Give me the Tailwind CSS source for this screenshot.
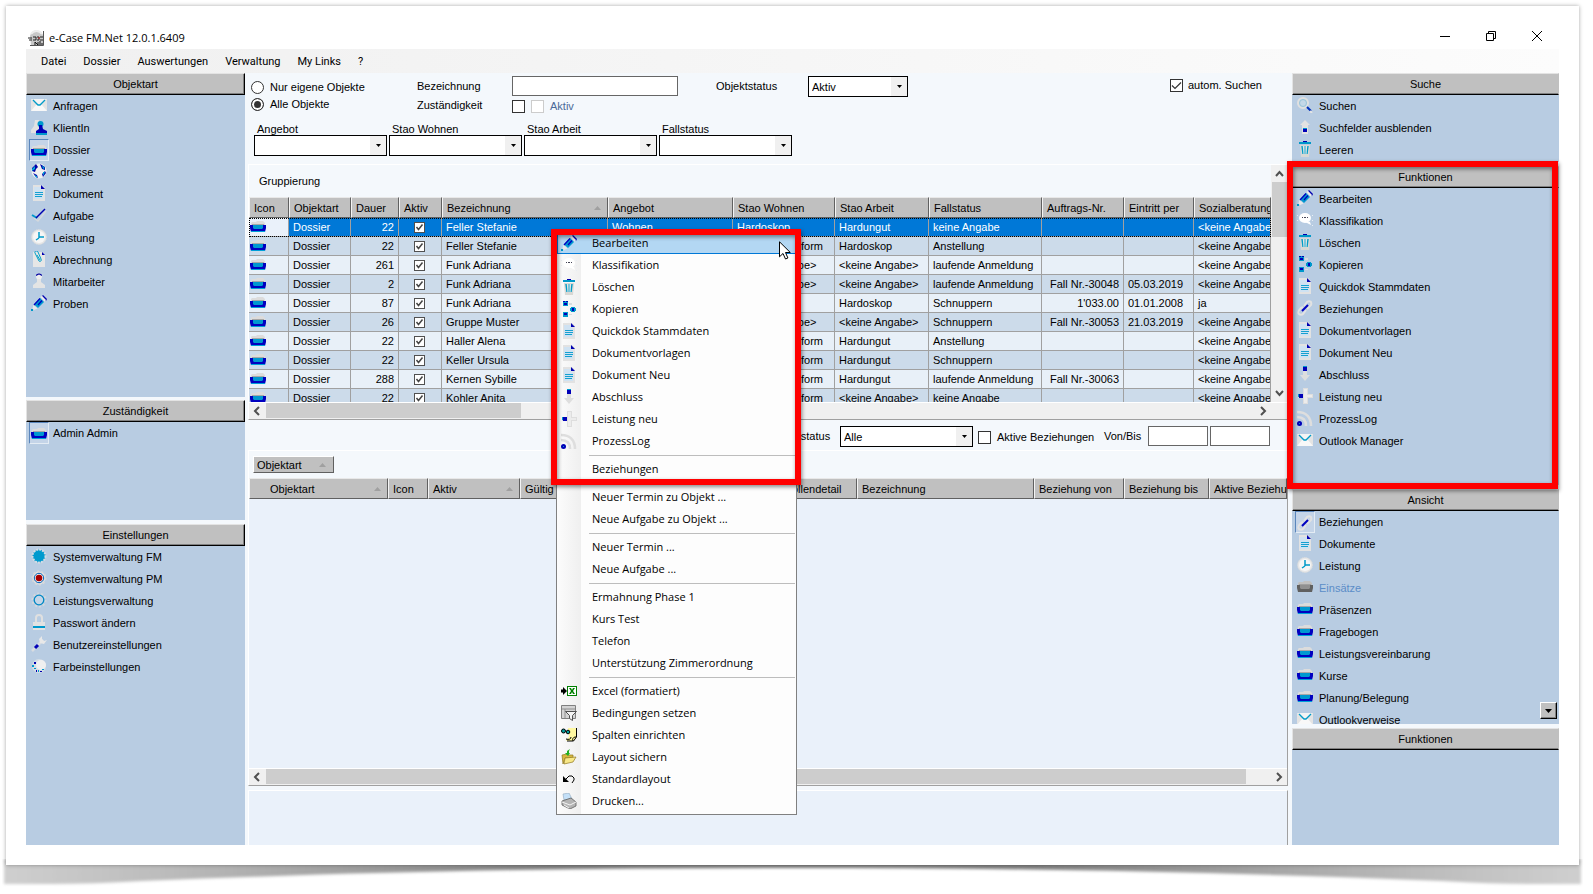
<!DOCTYPE html>
<html lang="de">
	<head>
		<meta charset="UTF-8" />
		<meta name="viewport" content="width=device-width, initial-scale=1.0" />
		<title>e-Case FM.Net 12.0.1.6409</title>
		<script src="https://cdn.jsdelivr.net/npm/@tailwindcss/browser@4"></script>
	</head>
	<body class="bg-white text-black h-screen overflow-hidden pl-[6px] pt-[6px] pr-[14px] pb-[29px] font-['Liberation_Sans',Arial,sans-serif] text-[11px] leading-4">
		<!-- icon sprite -->
		<svg class="hidden">
			<symbol id="i-mail" viewBox="0 0 16 16"><path d="M0 2h16v12H0z" fill="#e4e4e4"/><path d="M0 14l5-6h6l5 6z" fill="#f8f8f8"/><path d="M1 2h14L8 8z" fill="#f4f4f4"/><path d="M2 3l5 5h2l5-5" fill="none" stroke="#009bc8" stroke-width="1.300"/></symbol>
			<symbol id="i-client" viewBox="0 0 16 16"><path d="M4 1h4v4l3 5v4H0v-3l3-4z" fill="#e2e2e2"/><circle cx="9.500" cy="5" r="3" fill="#0098cc"/><path d="M8 6h3l1 4 4 2v3H5v-3l3-2z" fill="#0000b8"/><path d="M5 14h11v2H5z" fill="#0098cc"/></symbol>
			<symbol id="i-dossier" viewBox="0 0 16 16"><path d="M2 3h4l1-1h6l2 2v3H1V4z" fill="#dcdcdc"/><path d="M2 5h12v1H2z" fill="#a8a8a8"/><path d="M0 6h16v3l-1 4H1L0 9z" fill="#0000c0"/><path d="M3 6h10v3l-1 1H4L3 9z" fill="#0098d0"/><path d="M1 12h14v1H1z" fill="#00a0d8"/></symbol>
			<symbol id="i-dossier-off" viewBox="0 0 16 16"><path d="M2 3h4l1-1h6l2 2v3H1V4z" fill="#c0c0c0"/><path d="M2 5h12v1H2z" fill="#a0a0a0"/><path d="M0 6h16v3l-1 4H1L0 9z" fill="#606060"/><path d="M3 6h10v3l-1 1H4L3 9z" fill="#909090"/></symbol>
			<symbol id="i-globe" viewBox="0 0 16 16"><circle cx="8" cy="8" r="7.500" fill="#f0f0f0"/><path d="M5 1L1 5v3l3 1 1-3 2-2zM9 1l5 3v3l-3-1zM14 8l1 2-3 4-1-3zM2 10l3 4 2 1-1-3z" fill="#0000a8"/><path d="M4 3L1 6v2l3-2zM11 2l3 3-2 1zM12 9h2l-2 4zM3 12l3 3v-2z" fill="#00a8d8"/></symbol>
			<symbol id="i-doc" viewBox="0 0 16 16"><path d="M2 0h9l3 3v13H2z" fill="#e2e2e2"/><path d="M3 2h7v3h2v9H3z" fill="#cfe2f2"/><path d="M10 0l4 4h-4z" fill="#0000b0"/><path d="M4 7.500h8M4 9.500h8M4 11.500h7" stroke="#0098cc" stroke-width=".9"/></symbol>
			<symbol id="i-check" viewBox="0 0 16 16"><path d="M3 11l4 3 8-10" fill="none" stroke="#d4d8dc" stroke-width="1.500"/><path d="M1 8l5 3" stroke="#0098cc" stroke-width="2"/><path d="M5 11L14 2" stroke="#0000b0" stroke-width="1.400"/></symbol>
			<symbol id="i-clock" viewBox="0 0 16 16"><circle cx="8" cy="8" r="7.500" fill="#e6e6e6" stroke="#dcdcdc" stroke-dasharray="1 1"/><circle cx="8" cy="8" r="6" fill="#f6f6f6"/><path d="M8 3v6M8 8h5M8 9l-3 2" fill="none" stroke="#009ac8" stroke-width="1.500"/></symbol>
			<symbol id="i-clip" viewBox="0 0 16 16"><path d="M2 1h9l3 3v12H2z" fill="#e6e6e6"/><path d="M11 1l3 3h-3z" fill="#0000b0"/><path d="M6 4l3 5M4 2l4 8c1 1 3 0 2-2L7 1C6-1 3 0 4 2" fill="none" stroke="#00a0c8"/></symbol>
			<symbol id="i-staff" viewBox="0 0 16 16"><circle cx="8" cy="3.500" r="3" fill="#eee"/><path d="M5 2c1-2 5-2 6 0v1L8 1.500 5 3z" fill="#0000a0"/><path d="M6 6h4v3l4 3v3H2v-3l4-3z" fill="#e4e4e4"/></symbol>
			<symbol id="i-pencil" viewBox="0 0 16 16"><path d="M11 1l1-1 4 4-1 2z" fill="#0000b0"/><path d="M9.500 2L11 1l4 4-1.500 1.500z" fill="#eee"/><path d="M9 3l4 4-6 6-4-3.500z" fill="#0098d0"/><path d="M9 3.500L3 10M7 10l4-4.500" stroke="#0000c0" stroke-width="1.300"/><path d="M2.500 10l4 3.500L3 15l-1.500-1.500z" fill="#e8e8e8"/><path d="M0 14h2v2H0z" fill="#0098c8"/></symbol>
			<symbol id="i-gearblue" viewBox="0 0 16 16"><circle cx="8" cy="8" r="6.500" fill="#009ace" stroke="#d4dce4" stroke-width="2" stroke-dasharray="2 1"/></symbol>
			<symbol id="i-gearred" viewBox="0 0 16 16"><circle cx="8" cy="8" r="6.500" fill="#e4e4e4" stroke="#d8d8d8" stroke-width="2" stroke-dasharray="2 2"/><circle cx="8" cy="8" r="4.700" fill="#f0f0f0" stroke="#0060b8"/><circle cx="8" cy="8" r="3.300" fill="#a80000"/></symbol>
			<symbol id="i-gear" viewBox="0 0 16 16"><circle cx="8" cy="8" r="6.500" fill="none" stroke="#d4d8dc" stroke-width="2" stroke-dasharray="2 2"/><circle cx="8" cy="8" r="4.800" fill="#c4d6e8" stroke="#0088c4" stroke-width="1.300"/></symbol>
			<symbol id="i-lock" viewBox="0 0 16 16"><path d="M5 8V4c0-4 6-4 6 0v4" fill="none" stroke="#e0e0e0" stroke-width="2"/><path d="M2 8h12v8H2z" fill="#e2e2e2"/><path d="M2 12h12v2H2z" fill="#0098cc"/></symbol>
			<symbol id="i-wrench" viewBox="0 0 16 16"><path d="M1 15L12 4" stroke="#d8dce0" stroke-width="2.500"/><path d="M8 3l3-3v3l2 2 3-1-3 4-4-1z" fill="#e8e8e8"/><path d="M4 12l3-3" stroke="#0000b8" stroke-width="3"/></symbol>
			<symbol id="i-palette" viewBox="0 0 16 16"><circle cx="8" cy="8" r="7" fill="#d4dde6"/><circle cx="10" cy="7" r="5" fill="#f0f0f0"/><path d="M3 4h2v2H3zM5 12h1v2H5zM9 13h2v1H9z" fill="#0000b0"/><path d="M1 7h2v2H1zM3 10h2v1H3zM7 12h1v2H7zM11 11h2v1h-2z" fill="#0098cc"/></symbol>
			<symbol id="i-search" viewBox="0 0 16 16"><circle cx="6" cy="6" r="5" fill="#c4d8e8" stroke="#e0e0e0" stroke-width="2"/><circle cx="6" cy="6" r="3.500" fill="none" stroke="#98c4d8"/><path d="M10 10l4 4" stroke="#0030b8" stroke-width="2"/><path d="M13 14l2 2" stroke="#e4e4e4" stroke-width="2"/></symbol>
			<symbol id="i-up" viewBox="0 0 16 16"><path d="M8 1l5 5h-2v9H5V6H3z" fill="#e2e2e2"/><path d="M6 10h4v3H6z" fill="#0000b8"/><path d="M6 9h4v1H6z" fill="#0098cc"/></symbol>
			<symbol id="i-trash" viewBox="0 0 16 16"><path d="M3 4h10l-1 12H4z" fill="#d8d8d4"/><path d="M2 1h12v2H2z" fill="#0098c8"/><path d="M6 0h4v1H6z" fill="#0000b0"/><path d="M5 5l1 8M8 5v8M11 5l-1 8" stroke="#009cc8" stroke-width="1.400"/><path d="M7 5v8M9 5v8" stroke="#fff" stroke-width=".6"/></symbol>
			<symbol id="i-bubble" viewBox="0 0 16 16"><ellipse cx="8" cy="6" rx="6" ry="5" fill="#fff"/><path d="M8 10h5l1 3z" fill="#fff"/><path d="M5 5h1v1H5zM7 5h2v1H7zM10 5h1v1h-1z" fill="#445"/><path d="M0 3h1v1H0zM0 8h1v1H0zM15 3h1v1h-1zM15 8h1v1h-1zM15 13h1v1h-1z" fill="#e8eef4"/></symbol>
			<symbol id="i-copy" viewBox="0 0 16 16"><path d="M8 2h3v2H8zM8 13h3v1H8z" fill="#d8dce0"/><path d="M2 0h5v5H2zM2 11h5v5H2zM10 6h4v1h1v3h-1v1h-4v-1H9V7h1z" fill="#0098cc"/><path d="M2 0h2v1H2zM5 0h2v1H5zM3 2h3v2H3zM3 12h3v2H3zM11 7h2v3h-2z" fill="#0000b8"/></symbol>
			<symbol id="i-link" viewBox="0 0 16 16"><path d="M2 14c-2-2 0-4 2-6l2-1M9 10l-3 4c-1 1-3 1-4 0M7 6l3-4c3-2 5 0 4 3l-4 4" fill="none" stroke="#e2e2e2" stroke-width="2"/><path d="M5 11l6-6" stroke="#0000c0" stroke-width="2"/></symbol>
			<symbol id="i-down" viewBox="0 0 16 16"><path d="M6 1h4v8h3l-5 6-5-6h3z" fill="#dedede"/><path d="M6 1h4v4H6z" fill="#0000b8"/><path d="M6 0h4v1H6z" fill="#0098cc"/></symbol>
			<symbol id="i-plus" viewBox="0 0 16 16"><path d="M6 0h5v6h5v4h-5v6H6v-6H1V6h5z" fill="#dedede"/><path d="M7 1h3v14H7zM8 7h7v2H8z" fill="#ececec"/><path d="M2 6h4v4H2z" fill="#0000b8"/><path d="M1 6h1v3H1z" fill="#0098cc"/></symbol>
			<symbol id="i-rss" viewBox="0 0 16 16"><path d="M0 2c9 0 14 5 14 14M0 7c6 0 9 3 9 9" fill="none" stroke="#dedede" stroke-width="2.600"/><circle cx="2.500" cy="13.500" r="2.500" fill="#0000b8"/><path d="M2 13h1v1H2z" fill="#0098cc"/></symbol>
			<symbol id="i-excel" viewBox="0 0 16 16"><path d="M0 6.500h2V4l4 4-4 4V9.500H0z" fill="#000"/><path d="M6 3h10v10H6z" fill="#008000"/><path d="M7 4h8v8H7z" fill="#fff"/><path d="M8 5h2l1 2 1-2h2l-2 3 2 3h-2l-1-2-1 2H8l2-3z" fill="#008000"/></symbol>
			<symbol id="i-filter" viewBox="0 0 16 16"><path d="M.5.500h14v13H.5z" fill="#d4d4d4" stroke="#808080"/><path d="M1 4h13M4 4v9" stroke="#909090"/><path d="M4.500 6.500h11l-4 4v5l-3-2v-3z" fill="#f4f4f4" stroke="#505050"/></symbol>
			<symbol id="i-columns" viewBox="0 0 16 16"><path d="M7 1h8.500v9l-3 4H6l-1-1 3-3z" fill="#fff8a0"/><path d="M15.500 1v9l-3 4H6M5 12c3 1 5 0 5-2M12 14c-1-2 0-4 3-4" fill="none" stroke="#000"/><circle cx="2.500" cy="4" r="2" fill="#00a0a0" stroke="#000"/><circle cx="7" cy="5" r="1.800" fill="#00a0a0" stroke="#000"/></symbol>
			<symbol id="i-folder" viewBox="0 0 16 16"><path d="M1 6l5-1 1 1h5v3H4l-2 6z" fill="#d8b840" stroke="#907820" stroke-width=".7"/><path d="M4 9l11-1-3 5-9 2z" fill="#f8e888" stroke="#907820" stroke-width=".7"/><path d="M9 0L6 2v2H4l3 3 2-3H8V2z" fill="#20b020"/></symbol>
			<symbol id="i-undo" viewBox="0 0 16 16"><path d="M2 5v6h6z" fill="#000"/><path d="M5 8l3-3h3l2 2v2l-2 3" fill="none" stroke="#000"/></symbol>
			<symbol id="i-printer" viewBox="0 0 16 16"><path d="M3 7L2 1l6-1 3 6z" fill="#c4e0f8" stroke="#90a8c0" stroke-width=".6"/><path d="M1 8l9-3 5 4v4l-6 3-8-4z" fill="#b4b4b4" stroke="#606060" stroke-width=".8"/><path d="M1 9l8 3 6-3M3 12l5 3" fill="none" stroke="#f4f4f4"/></symbol>
		</svg>

		<div class="relative h-full">
			<!-- curled paper shadow -->
			<svg class="absolute -left-1 top-[calc(100%-6px)] h-8 w-[calc(100%+8px)]" viewBox="0 0 1581 32" preserveAspectRatio="none">
				<defs>
					<linearGradient id="curl"><stop offset="0" stop-color="#cfcfcf"/><stop offset=".1" stop-color="#bcbcbc"/><stop offset=".35" stop-color="#808080"/><stop offset=".65" stop-color="#808080"/><stop offset=".9" stop-color="#bcbcbc"/><stop offset="1" stop-color="#cfcfcf"/></linearGradient>
					<filter id="soft"><feGaussianBlur stdDeviation="1.500"/></filter>
				</defs>
				<path d="M2 0H1579V25H1530Q1490 25 1440 22C1200 12 1000 9 790 9S380 12 140 22Q90 25 50 25H2z" fill="url(#curl)" filter="url(#soft)"/>
			</svg>
			<div class="relative h-full bg-white shadow-[0_0_4px_rgba(0,0,0,0.35)] px-5 pt-[24px] pb-5 flex flex-col">
				<header class="h-[19px] shrink-0 flex items-start justify-between pl-[2px] pr-4">
					<div class="flex items-center gap-[5px] font-['Open_Sans','Noto_Sans',sans-serif]">
						<svg class="size-4" viewBox="0 0 16 16"><path d="M2 6c2-7 10-7 13-1v10H3z" fill="#c8c8c8"/><path d="M3 4c3-4 8-4 11 0" fill="none" stroke="#eee" stroke-width="2"/><path d="M15.500 1v14.500H2" fill="none" stroke="#555"/><path d="M0 8h4M1 10h3M5 7h3v3H5M9 7h2v3H9M12 7h3M12 10h3" stroke="#222" fill="none"/><path d="M7 15v-3l3 3v-3M11 12h2M11 14h4" stroke="#111" fill="none"/><path d="M10 8h2" stroke="#c02020"/></svg>
						<h1>e-Case FM.Net 12.0.1.6409</h1>
					</div>
					<div class="flex gap-[34px]">
						<button aria-label="Minimieren"><svg class="size-3" viewBox="0 0 12 12"><path d="M1 6.500h10" stroke="#000"/></svg></button>
						<button aria-label="Wiederherstellen"><svg class="size-3" viewBox="0 0 12 12"><path d="M1.500 3.500h7v7h-7zM3.500 3.500v-2h7v7h-2" fill="none" stroke="#000"/></svg></button>
						<button aria-label="Schliessen"><svg class="size-3" viewBox="0 0 12 12"><path d="M1 1l10 10M11 1L1 11" stroke="#000"/></svg></button>
					</div>
				</header>
				<nav class="h-6 shrink-0 flex items-center gap-[17px] pl-[15px] pt-px bg-linear-to-r from-[#f0f0f0] to-[#fcfcfc] font-[Roboto,sans-serif]">
					<a href="#">Datei</a><a href="#">Dossier</a><a href="#">Auswertungen</a><a href="#">Verwaltung</a><a href="#">My Links</a><a href="#">?</a>
				</nav>

				<div class="flex flex-1 min-h-0 bg-[#f4f8fc]">
					<!-- left -->
					<aside class="w-[219px] shrink-0 flex flex-col">
						<h2 class="h-[22px] shrink-0 text-center leading-5 bg-[#c0c0c0] border border-t-[#e3e3e3] border-l-[#e3e3e3] border-r-black border-b-black shadow-[inset_-1px_-1px_0_#808080]">Objektart</h2>
						<ul id="objektart" class="h-[302px] bg-[#b8cce2] pl-[3px]"></ul>
						<h2 class="mt-[3px] h-[22px] shrink-0 text-center leading-5 bg-[#c0c0c0] border border-t-[#e3e3e3] border-l-[#e3e3e3] border-r-black border-b-black shadow-[inset_-1px_-1px_0_#808080]">Zuständigkeit</h2>
						<ul id="zustaendigkeit" class="h-[98px] bg-[#b8cce2] pl-[3px]"></ul>
						<h2 class="mt-1 h-[22px] shrink-0 text-center leading-5 bg-[#c0c0c0] border border-t-[#e3e3e3] border-l-[#e3e3e3] border-r-black border-b-black shadow-[inset_-1px_-1px_0_#808080]">Einstellungen</h2>
						<ul id="einstellungen" class="flex-1 bg-[#b8cce2] pl-[3px]"></ul>
					</aside>

					<!-- center -->
					<main class="relative flex-1 min-w-0 ml-[3px] flex flex-col">
						<form class="h-[91px] shrink-0">
							<div class="flex items-start pl-[3px] pr-[26px] pt-[3px]">
								<div class="w-[166px] pt-[3px] flex flex-col gap-[1px]">
									<label class="flex items-center gap-[6px]"><input type="radio" name="scope" class="appearance-none size-[13px] rounded-full border border-[#333] bg-white checked:bg-[#333] checked:shadow-[inset_0_0_0_2px_white]" />Nur eigene Objekte</label>
									<label class="flex items-center gap-[6px]"><input type="radio" name="scope" checked class="appearance-none size-[13px] rounded-full border border-[#333] bg-white checked:bg-[#333] checked:shadow-[inset_0_0_0_2px_white]" />Alle Objekte</label>
								</div>
								<div class="w-[95px] pt-[2px] flex flex-col gap-[3px]">
									<label for="bez">Bezeichnung</label>
									<label for="zust">Zuständigkeit</label>
								</div>
								<div class="w-[166px]">
									<input id="bez" type="text" class="block w-full h-5 bg-white border border-[#666] px-1" />
									<div class="mt-[2px] flex items-center">
										<input id="zust" type="checkbox" class="appearance-none size-[13px] border border-[#333] bg-white mr-[6px]" />
										<label class="flex items-center gap-[6px] text-[#4a6a98]"><input type="checkbox" disabled class="appearance-none size-[13px] border border-[#ccc] bg-white" />Aktiv</label>
									</div>
								</div>
								<label for="ostatus" class="ml-[38px] w-[92px] pt-[2px]">Objektstatus</label>
								<div class="relative w-[100px]">
									<select id="ostatus" class="appearance-none w-full h-[21px] bg-white border border-black px-[3px]"><option>Aktiv</option></select>
									<span class="pointer-events-none absolute right-px inset-y-px w-4 bg-[#f0f0f0] grid place-items-center"><svg class="w-[5px] h-[3px]" viewBox="0 0 5 3"><path d="M0 0h5L2.500 3z"/></svg></span>
								</div>
								<label class="ml-auto mt-[1px] flex items-center gap-[5px]">
									<span class="relative size-[13px]"><input type="checkbox" checked class="block appearance-none size-[13px] border border-[#333] bg-white" /><svg class="pointer-events-none absolute inset-0" viewBox="0 0 13 13"><path d="M2 6.500l3 3 6-6" fill="none" stroke="#333" stroke-width="1.200"/></svg></span>
									autom. Suchen
								</label>
							</div>
							<div id="combos" class="flex gap-[2px] pl-[6px] pt-[7px]"></div>
						</form>

						<!-- upper grid -->
						<section class="h-[256px] shrink-0 flex flex-col border-t border-l border-white border-b border-b-[#a0a0a0]">
							<div class="flex flex-1 min-h-0">
								<div class="flex-1 min-w-0 overflow-hidden">
									<p class="h-8 leading-8 pl-[10px]">Gruppierung</p>
									<table class="w-full table-fixed border-separate border-spacing-0 whitespace-nowrap">
										<colgroup><col class="w-10"/><col class="w-[62px]"/><col class="w-[48px]"/><col class="w-[43px]"/><col class="w-[166px]"/><col class="w-[125px]"/><col class="w-[102px]"/><col class="w-[94px]"/><col class="w-[113px]"/><col class="w-[82px]"/><col class="w-[70px]"/><col/></colgroup>
										<thead id="head1"></thead>
										<tbody id="rows"></tbody>
									</table>
								</div>
								<div class="w-[17px] bg-[#f0f0f0] flex flex-col px-px">
									<svg class="w-full h-[17px] shrink-0" viewBox="0 0 15 17"><path d="M4 11l3.500-4 3.500 4" fill="none" stroke="#505050" stroke-width="2"/></svg>
									<div class="h-[55px] bg-[#cdcdcd]"></div>
									<svg class="mt-auto w-full h-[17px] shrink-0" viewBox="0 0 15 17"><path d="M4 6l3.500 4L11 6" fill="none" stroke="#505050" stroke-width="2"/></svg>
								</div>
							</div>
							<div class="h-[17px] shrink-0 bg-[#f0f0f0] border-t border-white flex pr-[17px]">
								<svg class="w-[17px] h-4" viewBox="0 0 17 16"><path d="M10 4L6 8l4 4" fill="none" stroke="#505050" stroke-width="2"/></svg>
								<div class="w-[255px] h-[15px] bg-[#cdcdcd]"></div>
								<svg class="ml-auto w-[17px] h-4" viewBox="0 0 17 16"><path d="M7 4l4 4-4 4" fill="none" stroke="#505050" stroke-width="2"/></svg>
							</div>
						</section>

						<form class="h-[30px] shrink-0 flex items-start justify-end pr-[18px] pt-[6px]">
							<label for="bstatus" class="pt-[2px] w-[71px]">Objektstatus</label>
							<div class="relative w-[133px]">
								<select id="bstatus" class="appearance-none w-full h-[21px] bg-white border border-black px-[3px]"><option>Alle</option></select>
								<span class="pointer-events-none absolute right-px inset-y-px w-4 bg-[#f0f0f0] grid place-items-center"><svg class="w-[5px] h-[3px]" viewBox="0 0 5 3"><path d="M0 0h5L2.500 3z"/></svg></span>
							</div>
							<label class="ml-[5px] pt-[3px] w-[126px] flex items-center gap-[6px]"><input type="checkbox" class="appearance-none size-[13px] border border-[#333] bg-white" />Aktive Beziehungen</label>
							<label for="von" class="pt-[2px] w-11">Von/Bis</label>
							<input id="von" type="text" class="w-[60px] h-5 bg-white border border-[#666]" />
							<input type="text" aria-label="Bis" class="ml-[2px] w-[60px] h-5 bg-white border border-[#666]" />
						</form>

						<!-- lower grid -->
						<section class="flex-1 min-h-0 flex flex-col border border-white border-r-[#a0a0a0] border-b-[#a0a0a0]">
							<div class="h-[27px] shrink-0 pl-1 pt-[5px]">
								<button class="w-[81px] h-[17px] flex items-center justify-between pl-[3px] pr-[7px] bg-[#c0c0c0] border border-white border-r-[#606060] border-b-[#606060]">Objektart <svg class="w-[7px] h-1" viewBox="0 0 7 4"><path d="M0 4h7L3.500 0z" fill="#a0a0a0"/></svg></button>
							</div>
							<div class="flex-1 min-h-0 overflow-hidden bg-[#eaf1fa]">
								<table class="w-full table-fixed border-separate border-spacing-0 whitespace-nowrap">
									<colgroup><col class="w-[139px]"/><col class="w-10"/><col class="w-[92px]"/><col class="w-[120px]"/><col class="w-[139px]"/><col class="w-[78px]"/><col class="w-[177px]"/><col class="w-[90px]"/><col class="w-[85px]"/><col/></colgroup>
									<thead id="head2"></thead>
								</table>
							</div>
							<div class="h-[17px] shrink-0 bg-[#f0f0f0] border-t border-white flex">
								<svg class="w-[17px] h-4 shrink-0" viewBox="0 0 17 16"><path d="M10 4L6 8l4 4" fill="none" stroke="#505050" stroke-width="2"/></svg>
								<div class="flex-1 h-[15px] bg-[#cdcdcd]"></div>
								<svg class="ml-6 w-[17px] h-4 shrink-0" viewBox="0 0 17 16"><path d="M7 4l4 4-4 4" fill="none" stroke="#505050" stroke-width="2"/></svg>
							</div>
						</section>
						<section class="mt-1 h-[55px] shrink-0 bg-[#eaf1fa] border-t border-l border-white border-r border-r-[#a0a0a0]"></section>

						<!-- context menu -->
						<div class="absolute left-[308px] top-[156px] w-[241px] bg-[#fdfdfd] border border-[#808080] py-[2px] font-['Open_Sans','Noto_Sans',sans-serif]">
							<div class="absolute inset-y-0 left-0 w-6 bg-linear-to-r from-[#fcfcfc] to-[#efefef]"></div>
							<ul id="menu" class="relative"></ul>
							<div class="pointer-events-none absolute -left-[6px] -top-px w-[250px] h-[256px] border-[6px] border-[#ff0000] shadow-[1px_2px_4px_rgba(0,0,0,0.45),inset_1px_2px_4px_rgba(0,0,0,0.45)]"></div>
							<svg class="pointer-events-none absolute left-[222px] top-[11px] w-3 h-[19px]" viewBox="0 0 12 19"><path d="M.5.800v15l3.500-3.300 2.500 5.500 2.400-1-2.400-5.500h4.800z" fill="#fff" stroke="#000"/></svg>
						</div>
					</main>

					<!-- right -->
					<aside class="w-[267px] ml-1 shrink-0 flex flex-col">
						<h2 class="h-[22px] shrink-0 text-center leading-5 bg-[#c0c0c0] border border-t-[#e3e3e3] border-l-[#e3e3e3] border-r-[#c0c0c0] border-b-black shadow-[inset_0_-1px_0_#808080]">Suche</h2>
						<ul id="suche" class="h-[67px] bg-[#b8cce2] pl-[3px]"></ul>
						<div class="relative mt-1">
							<h2 class="h-[22px] shrink-0 text-center leading-5 bg-[#c0c0c0] border border-t-[#e3e3e3] border-l-[#e3e3e3] border-r-[#c0c0c0] border-b-black shadow-[inset_0_-1px_0_#808080]">Funktionen</h2>
							<ul id="funktionen" class="h-[297px] bg-[#b8cce2] pl-[3px]"></ul>
							<div class="pointer-events-none absolute -left-[5px] right-px -top-[5px] -bottom-1 border-[6px] border-[#ff0000] shadow-[1px_2px_4px_rgba(0,0,0,0.45),inset_1px_2px_4px_rgba(0,0,0,0.45)]"></div>
						</div>
						<h2 class="mt-1 h-[22px] shrink-0 text-center leading-5 bg-[#c0c0c0] border border-t-[#e3e3e3] border-l-[#e3e3e3] border-r-[#c0c0c0] border-b-black shadow-[inset_0_-1px_0_#808080]">Ansicht</h2>
						<div class="relative h-[213px] shrink-0 overflow-hidden bg-[#b8cce2]">
							<ul id="ansicht" class="pl-[3px]"></ul>
							<button aria-label="Mehr" class="absolute right-[2px] bottom-[5px] w-[17px] h-[17px] grid place-items-center bg-[#c0c0c0] border border-white border-r-black border-b-black shadow-[inset_-1px_-1px_0_#808080]"><svg class="w-[7px] h-1" viewBox="0 0 7 4"><path d="M0 0h7L3.500 4z"/></svg></button>
						</div>
						<h2 class="mt-1 h-[22px] shrink-0 text-center leading-5 bg-[#c0c0c0] border border-t-[#e3e3e3] border-l-[#e3e3e3] border-r-[#c0c0c0] border-b-black shadow-[inset_0_-1px_0_#808080]">Funktionen</h2>
						<div class="flex-1 bg-[#b8cce2]"></div>
					</aside>
				</div>
			</div>
		</div>

		<script>
			const icon = name => `<svg class="size-4 shrink-0"><use href="#i-${name}"/></svg>`

			// [icon, label, state]
			const lists = {
				objektart: [['mail', 'Anfragen'], ['client', 'KlientIn'], ['dossier', 'Dossier', 'active'], ['globe', 'Adresse'], ['doc', 'Dokument'], ['check', 'Aufgabe'], ['clock', 'Leistung'], ['clip', 'Abrechnung'], ['staff', 'Mitarbeiter'], ['pencil', 'Proben']],
				zustaendigkeit: [['dossier', 'Admin Admin', 'active']],
				einstellungen: [['gearblue', 'Systemverwaltung FM'], ['gearred', 'Systemverwaltung PM'], ['gear', 'Leistungsverwaltung'], ['lock', 'Passwort ändern'], ['wrench', 'Benutzereinstellungen'], ['palette', 'Farbeinstellungen']],
				suche: [['search', 'Suchen'], ['up', 'Suchfelder ausblenden'], ['trash', 'Leeren']],
				funktionen: [['pencil', 'Bearbeiten'], ['bubble', 'Klassifikation'], ['trash', 'Löschen'], ['copy', 'Kopieren'], ['doc', 'Quickdok Stammdaten'], ['link', 'Beziehungen'], ['doc', 'Dokumentvorlagen'], ['doc', 'Dokument Neu'], ['down', 'Abschluss'], ['plus', 'Leistung neu'], ['rss', 'ProzessLog'], ['mail', 'Outlook Manager']],
				ansicht: [['link', 'Beziehungen', 'active'], ['doc', 'Dokumente'], ['clock', 'Leistung'], ['dossier-off', 'Einsätze', 'disabled'], ['dossier', 'Präsenzen'], ['dossier', 'Fragebogen'], ['dossier', 'Leistungsvereinbarung'], ['dossier', 'Kurse'], ['dossier', 'Planung/Belegung'], ['mail', 'Outlookverweise']],
			}
			for (const id in lists) {
				document.getElementById(id).innerHTML = lists[id].map(([ic, label, state]) => `
					<li><button class="h-[22px] w-full flex items-center gap-1 text-left ${state === 'disabled' ? 'text-[#5b8cc8]' : ''}" ${state === 'disabled' ? 'disabled' : ''}>
						<span class="w-5 h-[22px] flex justify-center border ${state === 'active' ? 'pt-[3px] bg-[#c4d4e8] border-t-[#5a86bc] border-l-[#5a86bc] border-r-[#e4ecf4] border-b-[#e4ecf4]' : 'pt-px border-transparent'}">${icon(ic)}</span>${label}
					</button></li>`).join('')
			}

			document.getElementById('combos').innerHTML = ['Angebot', 'Stao Wohnen', 'Stao Arbeit', 'Fallstatus'].map((l, i) => `
				<div class="w-[133px]">
					<label for="combo${i}" class="block h-[14px] pl-[3px]">${l}</label>
					<div class="relative">
						<select id="combo${i}" class="block appearance-none w-full h-[21px] bg-white border border-black px-[3px]"><option></option></select>
						<span class="pointer-events-none absolute right-px inset-y-px w-4 bg-[#f0f0f0] grid place-items-center"><svg class="w-[5px] h-[3px]" viewBox="0 0 5 3"><path d="M0 0h5L2.500 3z"/></svg></span>
					</div>
				</div>`).join('')

			const th = (label, sorted, indent) => `<th class="h-[21px] p-0 ${indent ? 'pl-5' : 'pl-1'} pr-[6px] font-normal text-left bg-[#c0c0c0] border border-t-[#e8e8e8] border-l-[#f4f4f4] border-r-[#606060] border-b-[#606060] overflow-hidden"><span class="flex items-center justify-between">${label}${sorted ? '<svg class="w-[7px] h-1 shrink-0" viewBox="0 0 7 4"><path d="M0 4h7L3.500 0z" fill="#a0a0a0"/></svg>' : ''}</span></th>`
			document.getElementById('head1').innerHTML = '<tr>' + ['Icon', 'Objektart', 'Dauer', 'Aktiv', 'Bezeichnung', 'Angebot', 'Stao Wohnen', 'Stao Arbeit', 'Fallstatus', 'Auftrags-Nr.', 'Eintritt per', 'Sozialberatung'].map(l => th(l, l === 'Bezeichnung')).join('') + '</tr>'
			document.getElementById('head2').innerHTML = '<tr>' + [['Objektart', 1, 1], ['Icon'], ['Aktiv', 1], ['Gültig von'], ['Gültig bis'], ['Rollendetail'], ['Bezeichnung'], ['Beziehung von'], ['Beziehung bis'], ['Aktive Beziehung']].map(a => th(...a)).join('') + '</tr>'

			const na = '&lt;keine Angabe&gt;'
			const wf = 'mobile Wohnform'
			const rows = [
				[22, 'Feller Stefanie', 'Hardoskop', 'Hardungut', 'keine Angabe', '', '', na],
				[22, 'Feller Stefanie', wf, 'Hardoskop', 'Anstellung', '', '', na],
				[261, 'Funk Adriana', na, na, 'laufende Anmeldung', '', '', na],
				[2, 'Funk Adriana', na, na, 'laufende Anmeldung', 'Fall Nr.-30048', '05.03.2019', na],
				[87, 'Funk Adriana', 'Hardoskop', 'Hardoskop', 'Schnuppern', "1'033.00", '01.01.2008', 'ja'],
				[26, 'Gruppe Muster', na, na, 'Schnuppern', 'Fall Nr.-30053', '21.03.2019', na],
				[22, 'Haller Alena', wf, 'Hardungut', 'Anstellung', '', '', na],
				[22, 'Keller Ursula', wf, 'Hardungut', 'Schnuppern', '', '', na],
				[288, 'Kernen Sybille', wf, 'Hardungut', 'laufende Anmeldung', 'Fall Nr.-30063', '', na],
				[22, 'Kohler Anita', wf, na, 'keine Angabe', '', '', na],
			]
			const td = (v, right) => `<td class="h-[19px] p-0 px-1 leading-[18px] overflow-hidden border-r border-b border-[#a0a0a0] ${right ? 'text-right' : ''}">${v}</td>`
			document.getElementById('rows').innerHTML = rows.map((r, i) => `
				<tr class="${i === 0 ? 'bg-[#0078d7] text-white outline outline-dotted outline-black -outline-offset-1' : i % 2 ? 'bg-[#ccdbea]' : 'bg-[#e8f0f8]'}">
					<td class="h-[19px] p-0 pl-px border-r border-b border-[#a0a0a0] ${i === 0 ? 'bg-[#eaf1fa]' : ''}">${icon('dossier')}</td>
					${td('Dossier')}${td(r[0], true)}
					<td class="h-[19px] p-0 pl-[15px] border-r border-b border-[#a0a0a0]"><span class="relative block size-[11px]"><input type="checkbox" checked aria-label="Aktiv" class="block appearance-none size-[11px] border border-[#505050] bg-white" /><svg class="pointer-events-none absolute inset-0" viewBox="0 0 11 11"><path d="M2.500 5l2 2.500 4-5" fill="none" stroke="#444" stroke-width="1.500"/></svg></span></td>
					${td(r[1])}${td('Wohnen')}${td(r[2])}${td(r[3])}${td(r[4])}${td(r[5], true)}${td(r[6])}${td(r[7])}
				</tr>`).join('')

			const menu = [['pencil', 'Bearbeiten'], ['bubble', 'Klassifikation'], ['trash', 'Löschen'], ['copy', 'Kopieren'], ['doc', 'Quickdok Stammdaten'], ['doc', 'Dokumentvorlagen'], ['doc', 'Dokument Neu'], ['down', 'Abschluss'], ['plus', 'Leistung neu'], ['rss', 'ProzessLog'], null,
				['', 'Beziehungen'], null, ['', 'Neuer Termin zu Objekt ...'], ['', 'Neue Aufgabe zu Objekt ...'], null, ['', 'Neuer Termin ...'], ['', 'Neue Aufgabe ...'], null,
				['', 'Ermahnung Phase 1'], ['', 'Kurs Test'], ['', 'Telefon'], ['', 'Unterstützung Zimmerordnung'], null,
				['excel', 'Excel (formatiert)'], ['filter', 'Bedingungen setzen'], ['columns', 'Spalten einrichten'], ['folder', 'Layout sichern'], ['undo', 'Standardlayout'], ['printer', 'Drucken...']]
			document.getElementById('menu').innerHTML = menu.map((m, i) => m ? `
				<li><button class="h-[22px] w-full flex items-center gap-[15px] pl-[3px] text-left border ${i === 0 ? 'bg-[#b3d7f3] border-[#0078d7]' : 'border-transparent'}"><span class="size-4">${m[0] ? icon(m[0]) : ''}</span>${m[1]}</button></li>`
				: '<li class="h-[6px] pt-[3px] pl-8 pr-px"><hr class="border-[#bdbdbd]" /></li>').join('')
		</script>
	</body>
</html>
